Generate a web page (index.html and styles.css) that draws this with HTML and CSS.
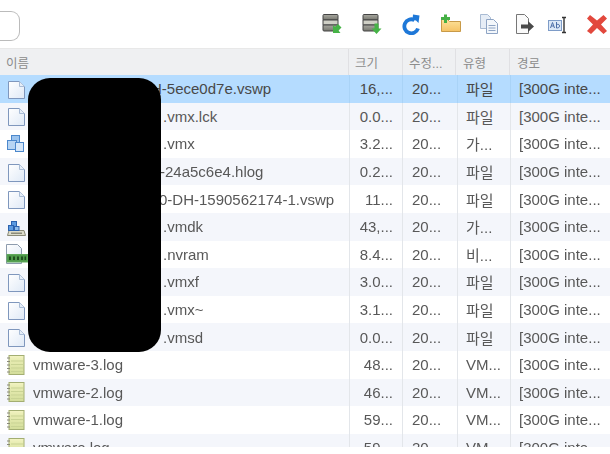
FILE: index.html
```html
<!DOCTYPE html>
<html lang="ko">
<head>
<meta charset="utf-8">
<title>파일 목록</title>
<link rel="stylesheet" href="styles.css">
</head>
<body>
<svg class="defs" width="0" height="0">
<defs>
<linearGradient id="pageFill" x1="0" y1="0" x2="1" y2="1"><stop offset="0" stop-color="#ffffff"/><stop offset="1" stop-color="#dfe9f6"/></linearGradient>
<linearGradient id="logFill" x1="0" y1="0" x2="0" y2="1"><stop offset="0" stop-color="#f4f4c4"/><stop offset=".2" stop-color="#e9edb4"/><stop offset="1" stop-color="#d3dd9a"/></linearGradient>
<linearGradient id="folderFill" x1="0" y1="0" x2="0" y2="1"><stop offset="0" stop-color="#fde39c"/><stop offset="1" stop-color="#f5c264"/></linearGradient>
<linearGradient id="dbFill" x1="0" y1="0" x2="0" y2="1"><stop offset="0" stop-color="#a8a8a0"/><stop offset="1" stop-color="#77776f"/></linearGradient>
<symbol id="file" viewBox="0 0 18 20"><path d="M.5 2.500h11l5 5v12H.5z" fill="url(#pageFill)" stroke="#7f97bd"/><path d="M11.500 2.500v5h5" fill="#e6eef8" stroke="#a9bcd6"/></symbol>
<symbol id="vmx" viewBox="0 0 18 20"><rect x="3.500" y="1.500" width="8" height="8" fill="#9cc4ee" stroke="#4c88cc"/><rect x="-.5" y="6.500" width="9" height="9" fill="#b6d4f3" stroke="#4c88cc"/><rect x="7.500" y="8.500" width="8" height="9" fill="#d6e7f9" stroke="#4c88cc"/></symbol>
<symbol id="vmdk" viewBox="0 0 22 20"><path d="M3 13.500h15l1.500 5H1.500z" fill="#dcdccb" stroke="#8a8a78"/><rect x="5" y="15.500" width="11" height="1.500" fill="#8a8a7a"/><rect x="5.500" y="4.500" width="5" height="5" fill="#5b9ae0" stroke="#2b62ae"/><rect x="2.500" y="8.500" width="5" height="5" fill="#5b9ae0" stroke="#2b62ae"/><rect x="8.500" y="9.500" width="4.500" height="4" fill="#8fbcea" stroke="#2b62ae"/></symbol>
<symbol id="nvram" viewBox="0 0 22 20"><path d="M.5 .5h11l4 4v15H.5z" fill="url(#pageFill)" stroke="#8e9cae"/><rect x="1" y="10.500" width="20.500" height="7.500" fill="#4f9a4a" stroke="#5fa85a"/><path d="M3 12.500h2v3.500H3zM7 12.500h2v3.500H7zM11 12.500h2v3.500h-2zM15 12.500h2v3.500h-2zM18.500 12.500h1.500v3.500h-1.500z" fill="#1f4f1f"/></symbol>
<symbol id="log" viewBox="0 0 22 20"><rect x="3" y=".5" width="15" height="19" fill="url(#logFill)" stroke="#a3ae72"/><path d="M5 6h12M5 9.500h12M5 13h12M5 16.500h12" stroke="#c9d394"/><path d="M1 3h3M1 6.500h3M1 10h3M1 13.500h3M1 17h3" stroke="#8a8a78"/></symbol>
</defs>
</svg>
<main class="panel">
  <div class="toolbar">
    <div class="searchbox"></div>
    <div class="tools">
      <svg class="tool" viewBox="0 0 22 22"><rect x="2" y="1.500" width="15" height="5.500" rx="1" fill="url(#dbFill)" stroke="#444"/><rect x="2" y="7" width="15" height="5" fill="#d0d0c6" stroke="#444"/><rect x="2" y="12" width="15" height="6" rx="1" fill="url(#dbFill)" stroke="#444"/><path d="M12 12l2 2 3-3 3.500 3.500-3 3 2 2.500h-7.500z" fill="#46b346"/></svg>
      <svg class="tool" viewBox="0 0 22 22"><rect x="2" y="1.500" width="15" height="5.500" rx="1" fill="url(#dbFill)" stroke="#444"/><rect x="2" y="7" width="15" height="5" fill="#d0d0c6" stroke="#444"/><rect x="2" y="12" width="15" height="6" rx="1" fill="url(#dbFill)" stroke="#444"/><path d="M13.500 10.500h4v5h3l-5 5.500-5-5.500h3z" fill="#46b346"/></svg>
      <svg class="tool" viewBox="0 0 22 22"><path d="M17 15.500A7 7 0 1 1 13.500 7" fill="none" stroke="#1e78d8" stroke-width="3.800"/><path d="M12 1.500l6.500 1-1 7.500-2.500-2.500-3.500-.5z" fill="#1e78d8"/></svg>
      <svg class="tool" viewBox="0 0 22 22"><path d="M1.500 6.500h6l2 2h11v10h-19z" fill="url(#folderFill)" stroke="#c89a48"/><path d="M4 1.500h3v2.500h3v3H7v3H4V7H1V4h3z" fill="#45b045"/></svg>
      <svg class="tool" viewBox="0 0 22 22"><path d="M2.500 1.500h7l3 3v11h-10z" fill="#e6edf6" stroke="#a9bbd3"/><path d="M8.500 6.500h7l4 4v10h-11z" fill="#f3f7fb" stroke="#8ea4c4"/><path d="M10.500 12.500h7M10.500 15h7M10.500 17.500h7" stroke="#8ea4c4"/></svg>
      <svg class="tool" viewBox="0 0 22 22"><path d="M2.500 1.500h8l4 4v15h-12z" fill="#fafafa" stroke="#777"/><path d="M7 11.500h7V8l6 5.500-6 5.500v-3.500H7z" fill="#4a4a4a"/></svg>
      <svg class="tool" viewBox="0 0 22 22"><rect x="1.500" y="7.500" width="13" height="10" fill="#dce8f7" stroke="#7e9cc8"/><path d="M3.500 15l2-5.500 2 5.500M4.300 13h2.500M9.500 9v6c2 0 3-.500 3-2s-1-2-3-1.500" fill="none" stroke="#4d6fa8"/><path d="M15 4.500h4M15 19.500h4M17 4.500v15" fill="none" stroke="#333" stroke-width="1.400"/></svg>
      <svg class="tool" viewBox="0 0 22 22"><path d="M4 2l7 5.500L17.500 2 21 5.500l-6 6 6 6.500-3.500 3-6.500-6-6 6L1 18l6-6.500-6-6z" fill="#e2483d"/></svg>
    </div>
  </div>
  <div class="grid">
    <div class="row head">
      <div class="cell name">이름</div><div class="cell size">크기</div><div class="cell date">수정...</div><div class="cell type">유형</div><div class="cell path">경로</div>
    </div>
    <div class="row selected">
      <div class="cell name"><svg class="icon"><use href="#file"/></svg><span class="gap" style="width:118px"></span>H-5ece0d7e.vswp</div><div class="cell size">16,...</div><div class="cell date">20...</div><div class="cell type">파일</div><div class="cell path">[300G inte...</div>
    </div>
    <div class="row alt">
      <div class="cell name"><svg class="icon"><use href="#file"/></svg><span class="gap" style="width:130px"></span>.vmx.lck</div><div class="cell size">0.0...</div><div class="cell date">20...</div><div class="cell type">파일</div><div class="cell path">[300G inte...</div>
    </div>
    <div class="row">
      <div class="cell name"><svg class="icon"><use href="#vmx"/></svg><span class="gap" style="width:130px"></span>.vmx</div><div class="cell size">3.2...</div><div class="cell date">20...</div><div class="cell type">가...</div><div class="cell path">[300G inte...</div>
    </div>
    <div class="row alt">
      <div class="cell name"><svg class="icon"><use href="#file"/></svg><span class="gap" style="width:127px"></span>-24a5c6e4.hlog</div><div class="cell size">0.2...</div><div class="cell date">20...</div><div class="cell type">파일</div><div class="cell path">[300G inte...</div>
    </div>
    <div class="row">
      <div class="cell name"><svg class="icon"><use href="#file"/></svg><span class="gap" style="width:126px"></span>0-DH-1590562174-1.vswp</div><div class="cell size">11...</div><div class="cell date">20...</div><div class="cell type">파일</div><div class="cell path">[300G inte...</div>
    </div>
    <div class="row alt">
      <div class="cell name"><svg class="icon"><use href="#vmdk"/></svg><span class="gap" style="width:130px"></span>.vmdk</div><div class="cell size">43,...</div><div class="cell date">20...</div><div class="cell type">가...</div><div class="cell path">[300G inte...</div>
    </div>
    <div class="row">
      <div class="cell name"><svg class="icon"><use href="#nvram"/></svg><span class="gap" style="width:130px"></span>.nvram</div><div class="cell size">8.4...</div><div class="cell date">20...</div><div class="cell type">비...</div><div class="cell path">[300G inte...</div>
    </div>
    <div class="row alt">
      <div class="cell name"><svg class="icon"><use href="#file"/></svg><span class="gap" style="width:130px"></span>.vmxf</div><div class="cell size">3.0...</div><div class="cell date">20...</div><div class="cell type">파일</div><div class="cell path">[300G inte...</div>
    </div>
    <div class="row">
      <div class="cell name"><svg class="icon"><use href="#file"/></svg><span class="gap" style="width:130px"></span>.vmx~</div><div class="cell size">3.1...</div><div class="cell date">20...</div><div class="cell type">파일</div><div class="cell path">[300G inte...</div>
    </div>
    <div class="row alt">
      <div class="cell name"><svg class="icon"><use href="#file"/></svg><span class="gap" style="width:130px"></span>.vmsd</div><div class="cell size">0.0...</div><div class="cell date">20...</div><div class="cell type">파일</div><div class="cell path">[300G inte...</div>
    </div>
    <div class="row">
      <div class="cell name"><svg class="icon"><use href="#log"/></svg>vmware-3.log</div><div class="cell size">48...</div><div class="cell date">20...</div><div class="cell type">VM...</div><div class="cell path">[300G inte...</div>
    </div>
    <div class="row alt">
      <div class="cell name"><svg class="icon"><use href="#log"/></svg>vmware-2.log</div><div class="cell size">46...</div><div class="cell date">20...</div><div class="cell type">VM...</div><div class="cell path">[300G inte...</div>
    </div>
    <div class="row">
      <div class="cell name"><svg class="icon"><use href="#log"/></svg>vmware-1.log</div><div class="cell size">59...</div><div class="cell date">20...</div><div class="cell type">VM...</div><div class="cell path">[300G inte...</div>
    </div>
    <div class="row alt">
      <div class="cell name"><svg class="icon"><use href="#log"/></svg>vmware.log</div><div class="cell size">59...</div><div class="cell date">20...</div><div class="cell type">VM...</div><div class="cell path">[300G inte...</div>
    </div>
  </div>
  <div class="mask"></div>
</main>
</body>
</html>
```
FILE: styles.css
```css
* { box-sizing: border-box; }
html, body { margin: 0; height: 100%; overflow: hidden; background: #fff; }
.defs { position: absolute; }
.panel {
  position: relative;
  width: 610px;
  height: 454px;
  font-family: "Liberation Sans", "Noto Sans CJK KR", sans-serif;
  font-size: 15px;
  color: #585858;
  filter: blur(0.5px);
}
.toolbar {
  height: 48px;
  display: flex;
  align-items: flex-start;
  justify-content: space-between;
  padding-top: 11px;
}
.searchbox {
  width: 20px;
  height: 30px;
  border: 1px solid #bbb;
  border-left: 0;
  border-radius: 0 9px 9px 0;
}
.tools {
  display: flex;
  padding: 2px 2px 0 0;
}
.tool { width: 22px; height: 22px; display: block; margin-left: 17px; }
.tool:nth-child(1) { margin-left: 0; }
.tool:nth-child(2), .tool:nth-child(3) { margin-left: 18px; }
.tool:nth-child(5) { margin-left: 16px; }
.tool:nth-child(6) { margin-left: 14px; }
.tool:nth-child(7) { margin-left: 11px; }
.grid {
  height: 399px;
  overflow: hidden;
}
.row {
  display: grid;
  grid-template-columns: 350px 53px 55px 53px 99px;
  height: 27.600px;
  align-items: stretch;
}
.head {
  grid-template-columns: 349px 54px 53px 54px 100px;
  height: 27px;
  background: #eff0f2;
  border-top: 1px solid #e8e8e8;
  font-size: 12.500px;
  color: #8c8c8c;
}
.alt { background: #f4f6fb; }
.selected { background: #b5dcff; color: #484848; }
.cell {
  display: flex;
  align-items: center;
  padding-left: 9px;
  white-space: nowrap;
  overflow: hidden;
  border-right: 1px solid #e3e6ea;
}
.head .cell { padding-left: 6px; border-right-color: #e0e0e3; }
.selected .cell { border-right-color: #a9d3f7; }
.name { padding-left: 6px; }
.size { justify-content: flex-end; padding: 0 9px 0 0; }
.head .size { justify-content: flex-start; }
.type, .path { padding-left: 8px; }
.head .type, .head .path { padding-left: 7px; }
.path { border-right: 0; }
.icon { width: 22px; height: 20px; margin-right: 5px; flex: none; }
.gap { display: inline-block; flex: none; }
.mask {
  position: absolute;
  left: 28px;
  top: 78px;
  width: 133px;
  height: 274px;
  background: #000;
  border-radius: 22px;
}
```
